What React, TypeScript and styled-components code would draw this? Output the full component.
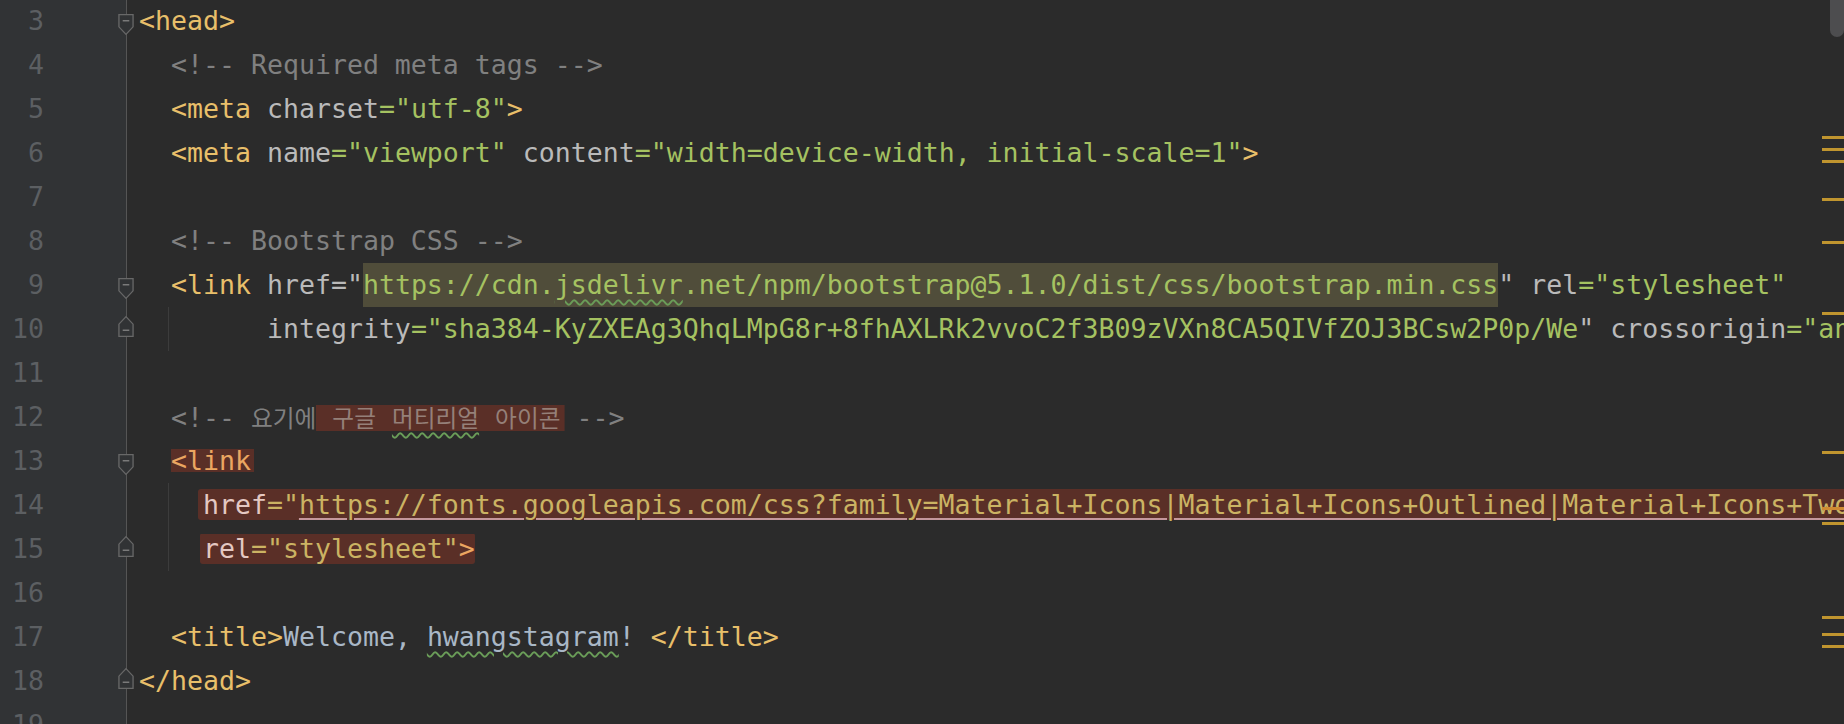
import * as React from "react"
import styled, { createGlobalStyle } from "styled-components"

const GlobalStyle = createGlobalStyle`
  html, body {
    margin: 0;
    padding: 0;
    background: #2b2b2b;
    overflow: hidden;
  }
`

type Kind = "tag" | "attr" | "val" | "cmt" | "txt" | "plain"

const normal: Record<Kind, string> = {
  tag: "#e8bf6a",
  attr: "#bababa",
  val: "#a5c261",
  cmt: "#808080",
  txt: "#a9b7c6",
  plain: "#bababa",
}

// colours of text that lies under the hand-drawn red marker
const marked: Record<Kind, string> = {
  tag: "#eba661",
  attr: "#e4c8c2",
  val: "#cbb363",
  cmt: "#958079",
  txt: "#a9b7c6",
  plain: "#e4c8c2",
}

const Frame = styled.div`
  position: relative;
  width: 1844px;
  height: 724px;
  overflow: hidden;
  background: #2b2b2b;
  font-family: "DejaVu Sans Mono", "Liberation Mono", monospace;
  font-size: 26.57px;
`

const Lines = styled.div`
  display: flex;
  flex-direction: column;
  margin-top: -1px;
`

const Row = styled.div`
  display: flex;
  height: 44px;
  line-height: 44px;
`

const Gutter = styled.div`
  display: flex;
  flex: 0 0 134px;
  background: linear-gradient(
    to right,
    #313335 0 126px,
    #555555 126px 127px,
    #2b2b2b 127px
  );
`

const Num = styled.div`
  width: 44px;
  text-align: right;
  color: #5c5f62;
`

const FoldSlot = styled.div`
  margin-left: auto;
  width: 16px;
  display: flex;
  align-items: center;
  justify-content: center;
`

const Code = styled.div<{ $guide?: boolean }>`
  flex: 1;
  padding-left: 5px;
  white-space: pre;
  overflow: hidden;
  background-image: ${(p) =>
    p.$guide
      ? "linear-gradient(to right, transparent 34px, #3c3c3c 34px 35px, transparent 35px)"
      : "none"};
`

const Tok = styled.span<{ $k: Kind; $m?: boolean }>`
  color: ${(p) => (p.$m ? marked : normal)[p.$k]};
`

const Hangul = styled.span`
  font-family: "Noto Sans CJK KR", "Noto Sans", sans-serif;
  font-size: 23.7px;
`

const Wavy = styled.span`
  text-decoration-line: underline;
  text-decoration-style: wavy;
  text-decoration-color: #6a9d58;
  text-decoration-thickness: 1.5px;
  text-underline-offset: 5px;
`

const LinkLine = styled.span`
  text-decoration-line: underline;
  text-decoration-color: #c4979c;
  text-decoration-thickness: 2px;
  text-underline-offset: 4px;
`

const Found = styled.span`
  display: inline-block;
  background: #504d3a;
`

const Mark = styled.span<{ $h: number; $pre?: number; $post?: number }>`
  margin-left: ${(p) => -(p.$pre ?? 0)}px;
  padding-left: ${(p) => p.$pre ?? 0}px;
  padding-right: ${(p) => p.$post ?? 0}px;
  margin-right: ${(p) => -(p.$post ?? 0)}px;
  background-image: linear-gradient(#5a2f27, #5a2f27);
  background-size: 100% ${(p) => p.$h}px;
  background-position: center;
  background-repeat: no-repeat;
  border-radius: 3px;
`

const Stripe = styled.div`
  position: absolute;
  top: 0;
  right: 0;
  width: 22px;
  height: 100%;
  pointer-events: none;
`

const StripeMark = styled.div<{ $warm?: boolean }>`
  position: absolute;
  left: 0;
  width: 22px;
  height: 3px;
  background: ${(p) => (p.$warm ? "#cf8a33" : "#c0952f")};
`

const Thumb = styled.div`
  position: absolute;
  top: 0;
  right: 0;
  width: 14px;
  height: 37px;
  border-radius: 0 0 7px 7px;
  background: #4d4d4f;
`

const Fold = ({ end }: { end?: boolean }) => (
  <svg width="17" height="23" viewBox="0 0 17 23" style={{ transform: `translateY(${end ? -3 : 3}px)${end ? " scaleY(-1)" : ""}` }}>
    <path d="M1 1 H16 V14 L8.5 22 L1 14 Z" fill="#313335" stroke="#686868" strokeWidth="1.4" />
    <path d="M5 7.5 H12" stroke="#7a7a7a" strokeWidth="1.6" />
  </svg>
)

type Line = { n: number; fold?: "start" | "end"; guide?: boolean; body?: React.ReactNode }

const T = (k: Kind, s: string, m?: boolean) => <Tok $k={k} $m={m}>{s}</Tok>

const lines: Line[] = [
  { n: 3, fold: "start", body: T("tag", "<head>") },
  { n: 4, body: <>{"  "}{T("cmt", "<!-- Required meta tags -->")}</> },
  {
    n: 5,
    body: (
      <>
        {"  "}{T("tag", "<meta")} {T("attr", "charset")}{T("val", '="utf-8"')}{T("tag", ">")}
      </>
    ),
  },
  {
    n: 6,
    body: (
      <>
        {"  "}{T("tag", "<meta")} {T("attr", "name")}{T("val", '="viewport"')} {T("attr", "content")}
        {T("val", '="width=device-width, initial-scale=1"')}{T("tag", ">")}
      </>
    ),
  },
  { n: 7 },
  { n: 8, body: <>{"  "}{T("cmt", "<!-- Bootstrap CSS -->")}</> },
  {
    n: 9,
    fold: "start",
    body: (
      <>
        {"  "}{T("tag", "<link")} {T("attr", 'href="')}
        <Found>
          {T("val", "https://cdn.")}
          <Wavy>{T("val", "jsdelivr")}</Wavy>
          {T("val", ".net/npm/bootstrap@5.1.0/dist/css/bootstrap.min.css")}
        </Found>
        {T("plain", '"')} {T("attr", "rel")}{T("val", '="stylesheet"')}
      </>
    ),
  },
  {
    n: 10,
    fold: "end",
    guide: true,
    body: (
      <>
        {"        "}{T("attr", "integrity")}
        {T("val", '="sha384-KyZXEAg3QhqLMpG8r+8fhAXLRk2vvoC2f3B09zVXn8CA5QIVfZOJ3BCsw2P0p/We')}
        {T("plain", '"')} {T("attr", "crossorigin")}{T("val", '="anonymous"')}{T("tag", ">")}
      </>
    ),
  },
  { n: 11 },
  {
    n: 12,
    body: (
      <>
        {"  "}{T("cmt", "<!-- ")}
        <Tok $k="cmt"><Hangul>요기에</Hangul></Tok>
        <Mark $h={26} $post={4}>
          <Tok $k="cmt" $m>
            {" "}<Hangul>구글</Hangul>{" "}
            <Wavy><Hangul>머티리얼</Hangul></Wavy>{" "}
            <Hangul>아이콘</Hangul>
          </Tok>
        </Mark>
        {T("cmt", " -->")}
      </>
    ),
  },
  {
    n: 13,
    fold: "start",
    body: (
      <>
        {"  "}
        <Mark $h={23} $post={3}>{T("tag", "<link", true)}</Mark>
      </>
    ),
  },
  {
    n: 14,
    guide: true,
    body: (
      <>
        {"    "}
        <Mark $h={32} $pre={5}>
          {T("attr", "href", true)}{T("val", '="', true)}
          <LinkLine>
            {T("val", "https://fonts.googleapis.com/css?family=Material+Icons|Material+Icons+Outlined|Material+Icons+Two+Tone|Material+Icons+Round", true)}
          </LinkLine>
        </Mark>
      </>
    ),
  },
  {
    n: 15,
    fold: "end",
    guide: true,
    body: (
      <>
        {"    "}
        <Mark $h={30} $pre={3}>
          {T("attr", "rel", true)}{T("val", '="stylesheet"', true)}{T("tag", ">", true)}
        </Mark>
      </>
    ),
  },
  { n: 16 },
  {
    n: 17,
    body: (
      <>
        {"  "}{T("tag", "<title>")}{T("txt", "Welcome, ")}
        <Wavy>{T("txt", "hwangstagram")}</Wavy>
        {T("txt", "! ")}{T("tag", "</title>")}
      </>
    ),
  },
  { n: 18, fold: "end", body: T("tag", "</head>") },
  { n: 19 },
]

const stripes = [136, 148, 160, 198, 241, 312, 451, 522, 616, 633, 645]

export default function App() {
  return (
    <>
      <GlobalStyle />
      <Frame>
        <Lines>
          {lines.map((l) => (
            <Row key={l.n}>
              <Gutter>
                <Num>{l.n}</Num>
                <FoldSlot>{l.fold && <Fold end={l.fold === "end"} />}</FoldSlot>
              </Gutter>
              <Code $guide={l.guide}>{l.body}</Code>
            </Row>
          ))}
        </Lines>
        <Stripe>
          {stripes.map((y) => (
            <StripeMark key={y} style={{ top: y }} />
          ))}
          <StripeMark $warm style={{ top: 507 }} />
        </Stripe>
        <Thumb />
      </Frame>
    </>
  )
}
